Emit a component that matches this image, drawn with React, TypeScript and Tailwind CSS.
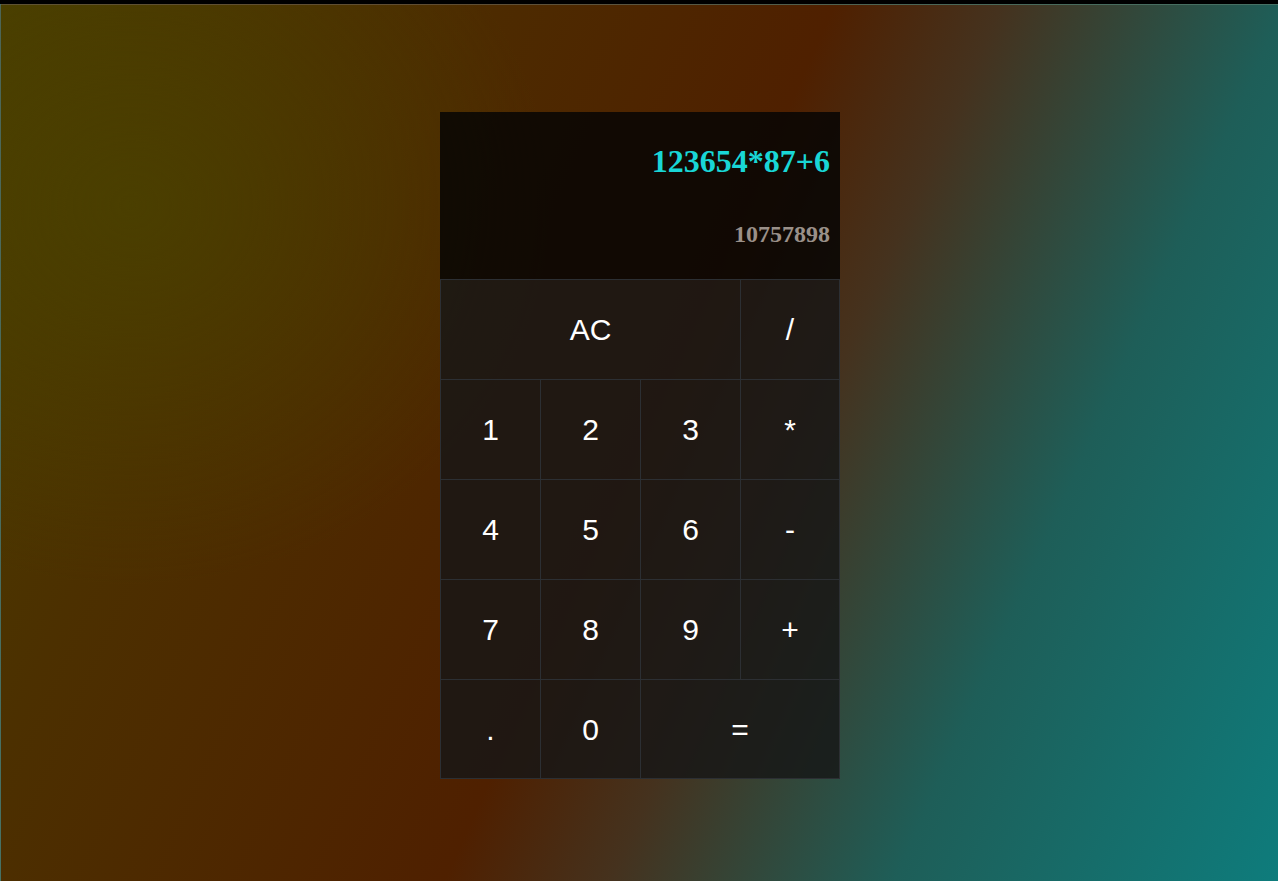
import React from "react";

type Key = { label: string; cls: string };

const keys: Key[] = [
  { label: "AC", cls: "col-span-3 border-l border-t" },
  { label: "/", cls: "border-l border-t border-r" },
  { label: "1", cls: "border-l border-t" },
  { label: "2", cls: "border-l border-t" },
  { label: "3", cls: "border-l border-t" },
  { label: "*", cls: "border-l border-t border-r" },
  { label: "4", cls: "border-l border-t" },
  { label: "5", cls: "border-l border-t" },
  { label: "6", cls: "border-l border-t" },
  { label: "-", cls: "border-l border-t border-r" },
  { label: "7", cls: "border-l border-t" },
  { label: "8", cls: "border-l border-t" },
  { label: "9", cls: "border-l border-t" },
  { label: "+", cls: "border-l border-t border-r" },
  { label: ".", cls: "border-l border-t border-b" },
  { label: "0", cls: "border-l border-t border-b" },
  { label: "=", cls: "col-span-2 border-l border-t border-r border-b" },
];

export default function App() {
  return (
    <div className="w-[1278px] h-[881px] bg-black pt-[4px] overflow-hidden">
      <div className="h-[877px] border-l border-t border-[#6b6a55]/60 bg-[radial-gradient(ellipse_420px_380px_at_130px_200px,rgba(74,66,0,0.75),rgba(74,66,0,0)),linear-gradient(114deg,#4a3e00_0%,#4c3000_20%,#4f2000_50%,#45321e_60%,#1e5e58_77%,#0e7c7c_100%)] flex justify-center pt-[107px] pl-[1px]">
        <div className="w-[400px] flex flex-col">
          <div className="h-[167px] bg-[rgba(4,4,4,0.82)] flex flex-col items-end pr-[10px] pt-[31px] font-['Liberation_Serif','Times_New_Roman',serif] font-bold">
            <div className="text-[32px] leading-[37px] text-[#19d6d6]">123654*87+6</div>
            <div className="mt-[40px] text-[24px] leading-[28px] text-[#9a9089]">10757898</div>
          </div>
          <div className="grid grid-cols-[100px_100px_100px_100px] auto-rows-[100px]">
            {keys.map((k, i) => (
              <button
                key={i}
                className={`${k.cls} border-[#2c2f33] bg-[rgba(22,22,22,0.82)] text-white text-[30px] font-['Liberation_Sans',Arial,sans-serif] flex items-center justify-center`}
              >
                {k.label}
              </button>
            ))}
          </div>
        </div>
      </div>
    </div>
  );
}
